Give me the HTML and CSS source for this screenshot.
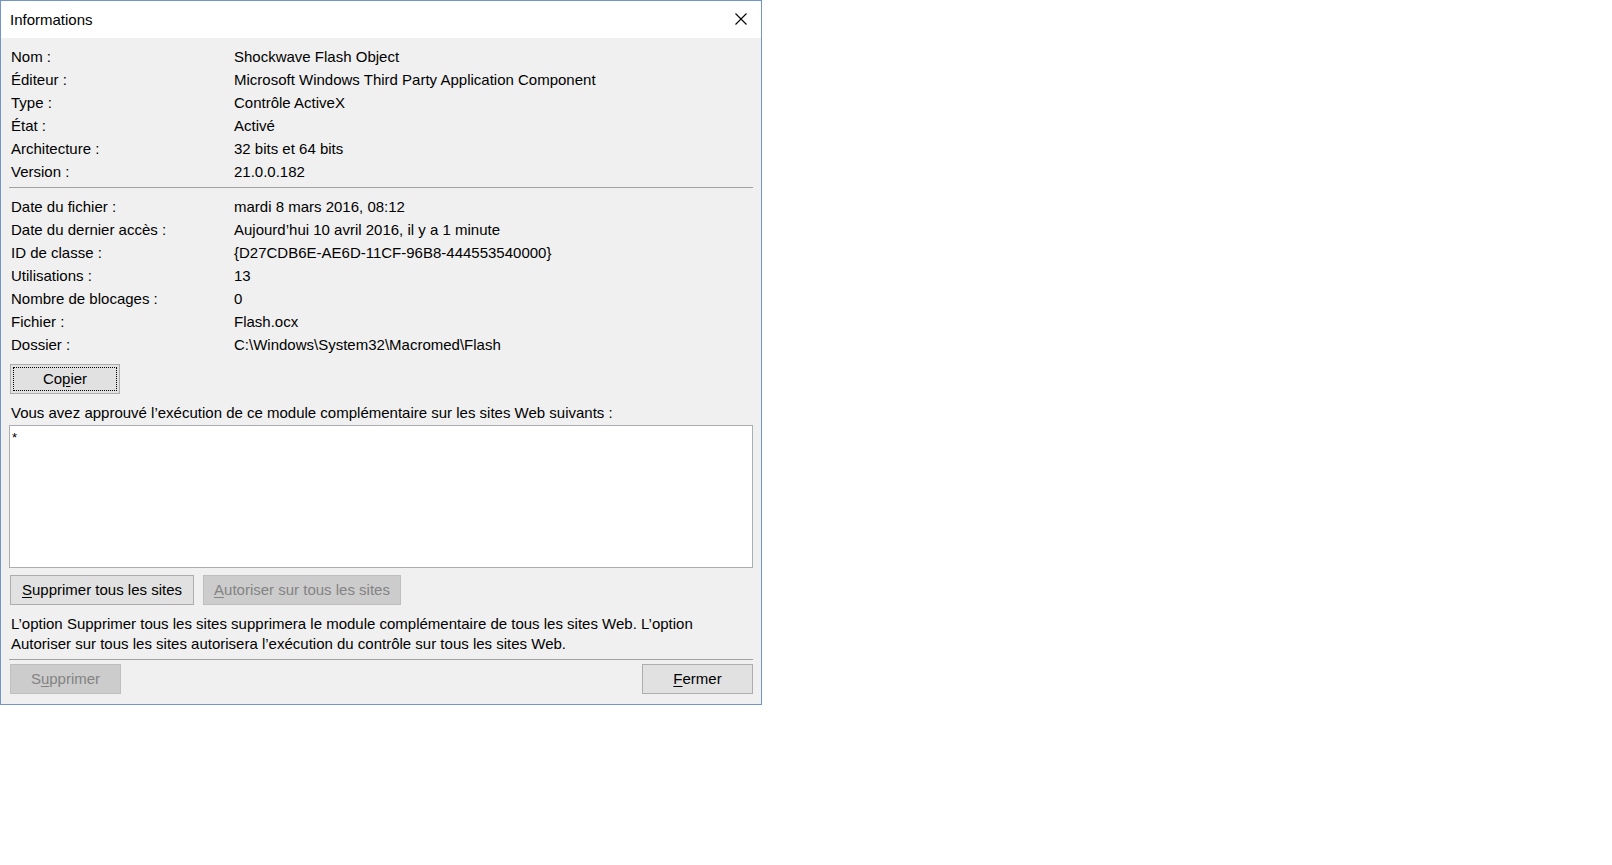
FILE: index.html
```html
<!DOCTYPE html>
<html lang="fr">
<head>
<meta charset="utf-8">
<title>Informations</title>
<link rel="stylesheet" href="styles.css">
</head>
<body>
<div class="window">
  <div class="titlebar">
    <span class="title">Informations</span>
    <svg class="close" width="12" height="12" viewBox="0 0 12 12" aria-hidden="true">
      <path d="M0.5 0.5 L11.5 11.5 M11.5 0.5 L0.5 11.5" stroke="#000" stroke-width="1.1" fill="none"/>
    </svg>
  </div>
  <div class="content">
    <div class="grid">
      <div class="lbl">Nom :</div><div class="val">Shockwave Flash Object</div>
      <div class="lbl">Éditeur :</div><div class="val">Microsoft Windows Third Party Application Component</div>
      <div class="lbl">Type :</div><div class="val">Contrôle ActiveX</div>
      <div class="lbl">État :</div><div class="val">Activé</div>
      <div class="lbl">Architecture :</div><div class="val">32 bits et 64 bits</div>
      <div class="lbl">Version :</div><div class="val">21.0.0.182</div>
    </div>
    <div class="sep sep-top"></div>
    <div class="grid">
      <div class="lbl">Date du fichier :</div><div class="val">mardi 8 mars 2016, 08:12</div>
      <div class="lbl">Date du dernier accès :</div><div class="val">Aujourd’hui 10 avril 2016, il y a 1 minute</div>
      <div class="lbl">ID de classe :</div><div class="val">{D27CDB6E-AE6D-11CF-96B8-444553540000}</div>
      <div class="lbl">Utilisations :</div><div class="val">13</div>
      <div class="lbl">Nombre de blocages :</div><div class="val">0</div>
      <div class="lbl">Fichier :</div><div class="val">Flash.ocx</div>
      <div class="lbl">Dossier :</div><div class="val">C:\Windows\System32\Macromed\Flash</div>
    </div>
    <div class="row-copy">
      <button class="btn btn-copy focused">Co<u>p</u>ier</button>
    </div>
    <p class="text approve">Vous avez approuvé l’exécution de ce module complémentaire sur les sites Web suivants :</p>
    <div class="listbox"><span class="item">*</span></div>
    <div class="row-sites">
      <button class="btn btn-all"><u>S</u>upprimer tous les sites</button>
      <button class="btn btn-allow disabled"><u>A</u>utoriser sur tous les sites</button>
    </div>
    <p class="text note">L’option Supprimer tous les sites supprimera le module complémentaire de tous les sites Web. L’option<br>Autoriser sur tous les sites autorisera l’exécution du contrôle sur tous les sites Web.</p>
    <div class="sep sep-bottom"></div>
    <div class="footer">
      <button class="btn btn-small disabled">S<u>u</u>pprimer</button>
      <button class="btn btn-small"><u>F</u>ermer</button>
    </div>
  </div>
</div>
</body>
</html>
```

FILE: styles.css
```css
* { box-sizing: border-box; }

html, body {
  margin: 0;
  padding: 0;
  background: #ffffff;
}

body {
  font-family: "Liberation Sans", Arial, sans-serif;
  font-size: 15px;
  color: #000000;
}

.window {
  width: 762px;
  height: 705px;
  border: 1px solid #7196c6;
  background: #f0f0f0;
  display: flex;
  flex-direction: column;
}

.titlebar {
  height: 37px;
  background: #ffffff;
  display: flex;
  align-items: center;
  justify-content: space-between;
  padding: 0 14px 0 9px;
  flex: none;
}

.title {
  line-height: 20px;
  padding-top: 1px;
}

.close {
  display: block;
  margin-bottom: 1px;
}

.content {
  flex: 1;
  padding: 7px 8px 0 8px;
  display: flex;
  flex-direction: column;
}

.grid {
  display: grid;
  grid-template-columns: 225px 1fr;
  line-height: 23px;
}

.lbl {
  padding-left: 2px;
}

.sep {
  height: 1px;
  background: #a0a0a0;
}

.sep-top {
  margin: 4px 0 7px 0;
}

.row-copy {
  margin-top: 8px;
  display: flex;
}

.btn {
  font-family: inherit;
  font-size: 15px;
  height: 30px;
  padding: 0;
  margin: 0;
  background: #e1e1e1;
  border: 1px solid #adadad;
  color: #000000;
  line-height: 26px;
  text-align: center;
  border-radius: 0;
}

.btn u {
  text-decoration: underline;
  text-underline-offset: 2px;
}

.btn.disabled {
  background: #cccccc;
  border-color: #bfbfbf;
  color: #838383;
}

.btn-copy {
  width: 110px;
  margin-left: 1px;
}

.focused {
  outline: 1px dotted #000000;
  outline-offset: -4px;
}

.text {
  margin: 0;
  line-height: 20px;
  padding-left: 2px;
}

.approve {
  margin-top: 9px;
}

.listbox {
  margin-top: 2px;
  height: 143px;
  background: #ffffff;
  border: 1px solid #abadb3;
  padding: 2px 0 0 2px;
  line-height: 18px;
}

.item {
  font-size: 13px;
}

.row-sites {
  margin-top: 7px;
  padding-left: 1px;
  display: flex;
  gap: 9px;
}

.btn-all {
  width: 184px;
}

.btn-allow {
  width: 198px;
}

.note {
  margin-top: 9px;
}

.sep-bottom {
  margin-top: 5px;
  background: #a0a0a0;
}

.footer {
  margin-top: 4px;
  padding-left: 1px;
  display: flex;
  justify-content: space-between;
}

.btn-small {
  width: 111px;
}
```
